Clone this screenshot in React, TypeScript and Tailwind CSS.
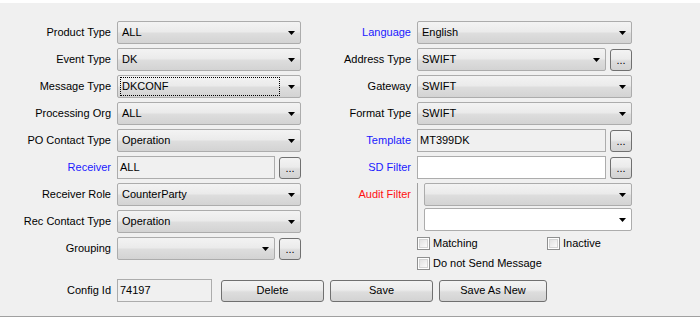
import React from 'react';

const font = { fontFamily: '"Liberation Sans", Arial, sans-serif' };

const grad = 'bg-[linear-gradient(#f3f3f3,#ebebeb_45%,#dddddd_55%,#d3d3d3)]';

function Arrow() {
    return (
        <svg width="7" height="4" viewBox="0 0 7 4" className="shrink-0">
            <path d="M0 0h7L3.5 4z" fill="#000" />
        </svg>
    );
}

function Combo({ value = '', width, focused = false, white = false }: { value?: string; width: string; focused?: boolean; white?: boolean }) {
    return (
        <div
            className={`${width} h-[23px] flex items-center rounded-[2px] border border-[#acacac] pl-[2px] pr-[5px] ${white ? 'bg-white' : grad}`}
        >
            <div className={`flex-1 h-[19px] flex items-center pl-[1px] ${focused ? 'border border-dotted border-black' : 'border border-transparent'}`}>
                {value}
            </div>
            <div className="ml-[8px]"><Arrow /></div>
        </div>
    );
}

function Field({ value = '', width, white = false }: { value?: string; width: string; white?: boolean }) {
    return (
        <div className={`${width} h-[23px] flex items-center border border-[#acacac] px-[2px] ${white ? 'bg-white' : 'bg-[#f0f0f0]'}`}>
            {value}
        </div>
    );
}

function Dots() {
    return (
        <div className={`w-[22px] h-[22px] rounded-[3px] border border-[#707070] ${grad} flex items-end justify-center pb-[4px] leading-none text-[11px]`}>
            ...
        </div>
    );
}

function Row({ label, color = 'text-black', labelW, children }: { label: string; color?: string; labelW: string; children: React.ReactNode }) {
    return (
        <div className="flex items-center h-[23px]">
            <div className={`${labelW} text-right pr-[6px] ${color}`}>{label}</div>
            {children}
        </div>
    );
}

function Check({ label }: { label: string }) {
    return (
        <div className="flex items-center gap-[3px] h-[13px]">
            <div className="w-[13px] h-[13px] border border-[#8e8f8f] bg-white p-[1px]">
                <div className="w-full h-full border border-[#d4d4d4] bg-linear-to-br from-[#e2e2e2] to-[#fbfbfb]" />
            </div>
            <span>{label}</span>
        </div>
    );
}

function Btn({ label, width }: { label: string; width: string }) {
    return (
        <div className={`${width} h-[22px] rounded-[3px] border border-[#707070] ${grad} flex items-center justify-center`}>
            {label}
        </div>
    );
}

export default function App() {
    return (
        <div className="w-[700px] h-[317px] bg-white pt-[3px] text-[11px] text-black" style={font}>
            <div className="h-[314px] bg-[#f0f0f0] border-b border-[#a0a0a0] pt-[18px]">
                <div className="flex">
                    <div className="flex flex-col gap-[4px] w-[302px]">
                        <Row label="Product Type" labelW="w-[117px]"><Combo value="ALL" width="w-[184px]" /></Row>
                        <Row label="Event Type" labelW="w-[117px]"><Combo value="DK" width="w-[184px]" /></Row>
                        <Row label="Message Type" labelW="w-[117px]"><Combo value="DKCONF" width="w-[184px]" focused /></Row>
                        <Row label="Processing Org" labelW="w-[117px]"><Combo value="ALL" width="w-[184px]" /></Row>
                        <Row label="PO Contact Type" labelW="w-[117px]"><Combo value="Operation" width="w-[184px]" /></Row>
                        <Row label="Receiver" color="text-[#1a1aff]" labelW="w-[117px]">
                            <Field value="ALL" width="w-[158px]" />
                            <div className="ml-[4px]"><Dots /></div>
                        </Row>
                        <Row label="Receiver Role" labelW="w-[117px]"><Combo value="CounterParty" width="w-[184px]" /></Row>
                        <Row label="Rec Contact Type" labelW="w-[117px]"><Combo value="Operation" width="w-[184px]" /></Row>
                        <Row label="Grouping" labelW="w-[117px]">
                            <Combo width="w-[158px]" />
                            <div className="ml-[4px]"><Dots /></div>
                        </Row>
                    </div>
                    <div className="flex flex-col gap-[4px]">
                        <Row label="Language" color="text-[#1a1aff]" labelW="w-[115px]"><Combo value="English" width="w-[215px]" /></Row>
                        <Row label="Address Type" labelW="w-[115px]">
                            <Combo value="SWIFT" width="w-[189px]" />
                            <div className="ml-[4px]"><Dots /></div>
                        </Row>
                        <Row label="Gateway" labelW="w-[115px]"><Combo value="SWIFT" width="w-[215px]" /></Row>
                        <Row label="Format Type" labelW="w-[115px]"><Combo value="SWIFT" width="w-[215px]" /></Row>
                        <Row label="Template" color="text-[#1a1aff]" labelW="w-[115px]">
                            <Field value="MT399DK" width="w-[189px]" />
                            <div className="ml-[4px]"><Dots /></div>
                        </Row>
                        <Row label="SD Filter" color="text-[#1a1aff]" labelW="w-[115px]">
                            <Field width="w-[189px]" white />
                            <div className="ml-[4px]"><Dots /></div>
                        </Row>
                        <div className="flex">
                            <div className="w-[115px] h-[23px] flex items-center justify-end pr-[6px] text-[#ff1010]">Audit Filter</div>
                            <div className="border-l border-[#a0a0a0] pl-[6px] flex flex-col gap-[2px]">
                                <Combo width="w-[208px]" />
                                <Combo width="w-[208px]" white />
                            </div>
                        </div>
                        <div className="pl-[115px] flex flex-col gap-[7px] mt-[2px]">
                            <div className="flex">
                                <div className="w-[130px]"><Check label="Matching" /></div>
                                <Check label="Inactive" />
                            </div>
                            <Check label="Do not Send Message" />
                        </div>
                    </div>
                </div>
                <div className="flex items-center mt-[9px]">
                    <div className="w-[117px] text-right pr-[6px]">Config Id</div>
                    <Field value="74197" width="w-[95px]" />
                    <div className="ml-[9px] flex gap-[6px]">
                        <Btn label="Delete" width="w-[103px]" />
                        <Btn label="Save" width="w-[103px]" />
                        <Btn label="Save As New" width="w-[108px]" />
                    </div>
                </div>
            </div>
        </div>
    );
}
